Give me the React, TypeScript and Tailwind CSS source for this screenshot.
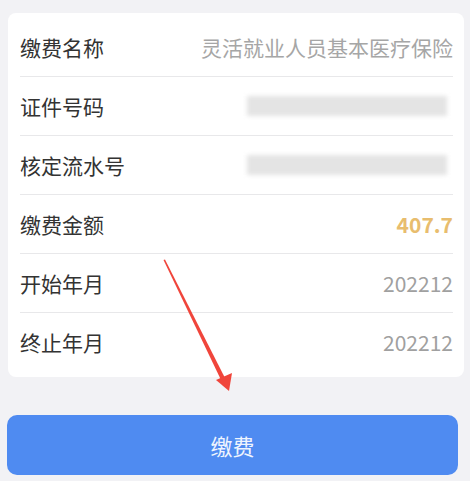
import React from "react";

const font = { fontFamily: '"Noto Sans CJK SC", "Noto Sans", sans-serif' };

function Row({ label, children, last }: { label: string; children?: React.ReactNode; last?: boolean }) {
  return (
    <div className={`h-[59px] flex items-center justify-between ${last ? "" : "border-b border-[#e8e8ea]"}`}>
      <span className="text-[21px] text-[#333333] leading-none">{label}</span>
      {children}
    </div>
  );
}

function Blurred() {
  return (
    <div className="relative w-[206px] h-[22px]">
      <div className="absolute left-0 top-[1px] w-[200px] h-[20px] bg-[#e4e4e4] blur-[2px]" />
    </div>
  );
}

export default function App() {
  return (
    <div className="relative w-[470px] h-[481px] bg-[#f2f2f5] overflow-hidden" style={font}>
      <div className="pt-[13px]">
        <div className="ml-[8px] w-[456px] h-[364px] bg-white rounded-[8px] pt-[5px] pl-[12px] pr-[11px]">
          <Row label="缴费名称">
            <span className="text-[21px] text-[#a6a6a6] leading-none">灵活就业人员基本医疗保险</span>
          </Row>
          <Row label="证件号码">
            <Blurred />
          </Row>
          <Row label="核定流水号">
            <Blurred />
          </Row>
          <Row label="缴费金额">
            <span className="text-[21px] font-bold text-[#e8bd6e] leading-none">407.7</span>
          </Row>
          <Row label="开始年月">
            <span className="text-[21px] text-[#a0a0a0] leading-none">202212</span>
          </Row>
          <Row label="终止年月" last>
            <span className="text-[21px] text-[#a0a0a0] leading-none">202212</span>
          </Row>
        </div>
        <button className="mt-[38px] ml-[7px] w-[451px] h-[60px] rounded-[10px] bg-[#4f8bf1] text-[#eef4fe] text-[22px] flex items-center justify-center">
          缴费
        </button>
      </div>
      <svg className="absolute left-0 top-0 pointer-events-none" width="470" height="481" viewBox="0 0 470 481">
        <polygon points="163.5,260 165,259.5 225.5,379 221.5,381" fill="#f0453b" />
        <polygon points="229,391 216,380 232,373" fill="#f0453b" />
      </svg>
    </div>
  );
}
